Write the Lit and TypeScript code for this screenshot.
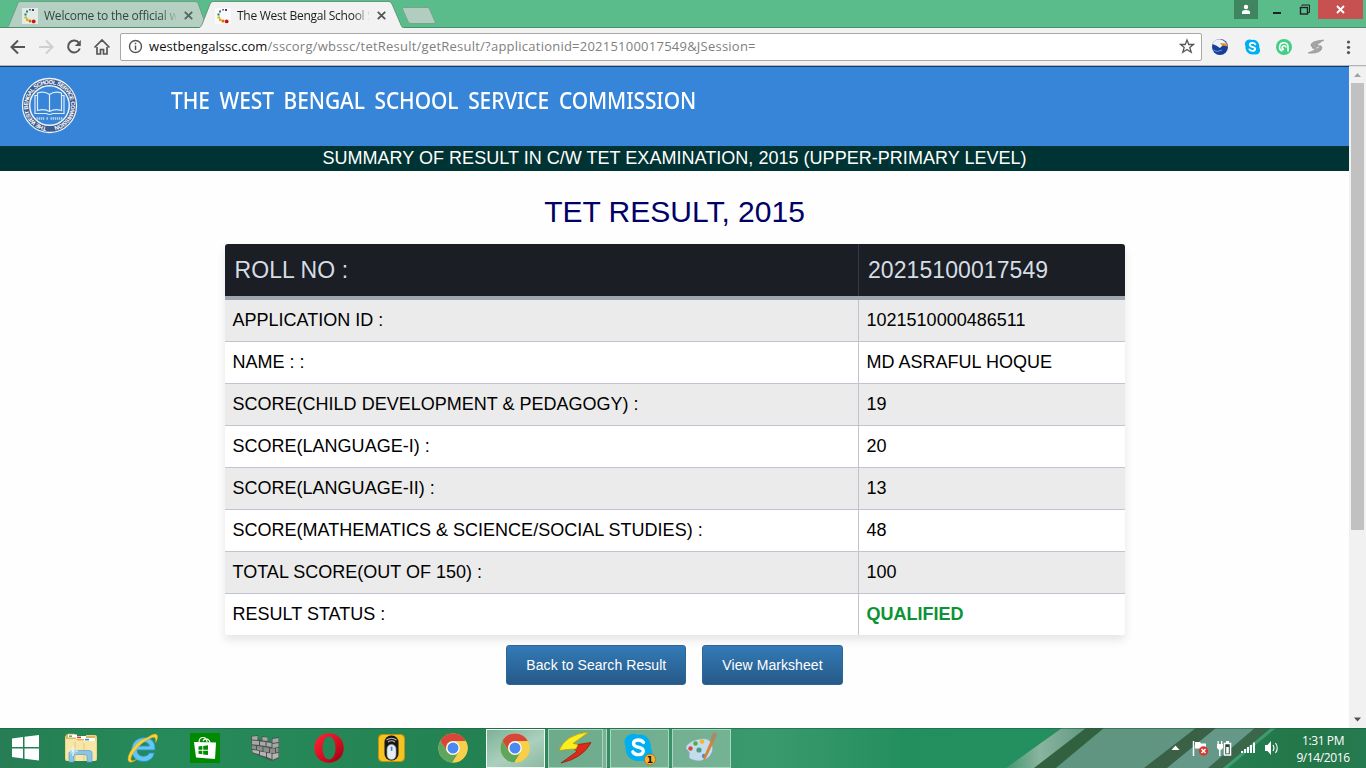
import { LitElement, html, svg, css } from "lit";
import { customElement, property } from "lit/decorators.js";

const favicon = html`<svg class="fav" width="16" height="16" viewBox="0 0 16 16">
  <rect width="16" height="16" fill="#fff" opacity=".6"/>
  <rect x="7" y="1" width="2" height="1.5" fill="#66619a"/><rect x="10" y="1" width="2" height="2" fill="#4b3a78"/>
  <rect x="4" y="2.5" width="2" height="2" fill="#3f6c8c"/><rect x="2.5" y="5.5" width="2" height="2" fill="#267a4a"/>
  <rect x="2.5" y="8.5" width="2.5" height="2" fill="#b7bb2c"/><rect x="4" y="10.5" width="2.5" height="2.5" fill="#e8a50f"/>
  <circle cx="8" cy="13" r="1.5" fill="#e06a12"/><circle cx="11.7" cy="13.4" r="1.9" fill="#cf1212"/></svg>`;

const chromeIcon = html`<svg width="30" height="30" viewBox="-15 -15 30 30">
  <circle r="14.6" fill="#f7cf48"/>
  <path d="M-12.6 -7.3A14.6 14.6 0 0 1 12.8 -7H0A7 7 0 0 0 -6.1 3.5Z" fill="#d8453a"/>
  <path d="M-12.6 -7.3A14.6 14.6 0 0 0 -.6 14.6L6.1 3.5A7 7 0 0 1 -6.1 3.5Z" fill="#5ca660"/>
  <path d="M12.8 -7A14.6 14.6 0 0 1 -.6 14.6L6.1 3.5A7 7 0 0 0 0 -7Z" fill="#f7cf48"/>
  <circle r="6.8" fill="#fff"/><circle r="5.5" fill="#4a8af0"/></svg>`;

const skypeShape = svg`<path d="M9 1Q12 .3 14 1.8Q22 .3 26 7Q28.5 11 28 16Q30.5 20 28.500 24Q25.500 29.500 19 27.800Q10 29.500 5 23Q2 19 2.600 13.500Q.500 9 2.500 5Q5 1.500 9 1Z" fill="#00aff0"/>
  <path d="M20.500 9.500Q18.500 6.800 15 7Q10.500 7.200 10.500 10.600Q10.500 13.300 15 14.200Q20.300 15.300 20.300 18Q20 21.600 15.500 21.700Q11.500 21.700 9.800 18.800" fill="none" stroke="#fff" stroke-width="3.300" stroke-linecap="round"/>`;

const icons = {
  explorer: html`<svg width="34" height="30" viewBox="0 0 34 30">
    <path d="M1 5Q1 2 3 2H11L13 5H22V2H31Q33 2 33 5V26Q33 28 31 28H3Q1 28 1 26Z" fill="#ecd382"/>
    <path d="M2 4Q2 .8 4 .8H10Q11 .8 12 3H31V7H2Z" fill="#d9b75e"/>
    <rect x="4" y="1.500" width="9" height="3" fill="#fff"/><rect x="5" y="2.500" width="3" height="1.400" fill="#3ca646"/>
    <rect x="12" y="3" width="10" height="3" fill="#fff"/><rect x="13" y="3.600" width="4" height="1.600" fill="#d63b2e"/>
    <rect x="20" y="5" width="11" height="3" fill="#fff"/><rect x="21" y="5.800" width="4" height="1.600" fill="#3b85cf"/>
    <path d="M2 6H12L14 8H32V25Q32 28 30 28H4Q2 28 2 25Z" fill="#f8e6a8"/><path d="M11 9V28M20 10V28" stroke="#e4c878"/>
    <path d="M5 29V20Q5 17.500 8 17.500H25Q28 17.500 28 20V29H23V23Q23 21.500 21 21.500H12Q10 21.500 10 23V29Z" fill="#8cc4e4" stroke="#5d9fc9" stroke-width=".7"/>
    <path d="M9 13V23M4 18H14" stroke="#e8faff" stroke-width="1.200"/><path d="M6 15L12 21M12 15L6 21" stroke="#e8faff" stroke-width=".6"/></svg>`,
  ie: html`<svg width="32" height="32" viewBox="0 0 32 32">
    <path d="M22.500 21Q20.500 24.300 16.500 24.300Q10.500 24 10 18H28Q29 7 18.500 5.500Q6 5.500 4.500 17Q5 29.500 17 29.500Q25 29.500 27.500 21ZM10.300 14Q11.500 10 16.500 10Q21.500 10 22.300 14Z" fill="#62c8f3" stroke="#288fc8" stroke-width=".9"/>
    <path d="M20.500 5.500Q29.500 -.5 30.500 4Q31 6.500 28.500 10.500Q29.500 4.500 25.500 5.500Q19 7 11 15Q3 24 4 28Q5.500 30 10 27Q2.500 33 1 28Q.5 21 10 11.500Q15 7 20.500 5.500Z" fill="#f9d33c" stroke="#dfa51c" stroke-width=".5"/></svg>`,
  store: html`<svg width="30" height="30" viewBox="0 0 30 30"><rect width="30" height="30" fill="#008a00"/>
    <path d="M4 9L26 9.500L25 26L6 24.500Z" fill="#fff"/><path d="M9 9.500Q9 4.500 13 4.500T17 9.500M13 8Q14 5.500 17 6Q19.500 6.500 20 10" fill="none" stroke="#fff" stroke-width="1.200"/>
    <path d="M8.500 13.500L12.300 13V16.800H8.500ZM13.200 12.900L18 12.300V16.800H13.200ZM8.500 17.700H12.300V21.300L8.500 20.800ZM13.200 17.700H18V22L13.200 21.400Z" fill="#008a00"/></svg>`,
  wall: html`<svg class="wall" width="30" height="26" viewBox="0 0 30 26"><path d="M0 1L7 0V4L11 5V1L17 2V6L21 7V3L28 2V23L21 26L1 18Z" fill="#4d514f"/>
    <g fill="#a6aaa7"><path d="M1 1.500L6.500 1V5L1 4.500ZM11.500 2L16.500 2.500V6L11.500 5.500ZM21.500 4L27.500 3V7L21.500 8Z"/><path d="M1 5.500L8 6.100V10L1 9.300ZM9 6.500L14.500 7V11L9 10.200ZM15.500 7.200L20.500 8V12L15.500 11.200ZM21.500 9L27.500 8V12L21.500 13Z"/></g>
    <g fill="#8b8f8c"><path d="M1 10.300L5 11V14.500L1 13.700ZM6 11L11.500 11.800V16L6 15ZM12.500 12L18 13V17.500L12.500 16.500ZM19 13.500L24 13.500V18L19 18ZM25 13L27.500 13V17L25 17.500Z"/></g>
    <g fill="#b3b6b3"><path d="M1.500 14.700L8 16V19.300L1.500 17.300ZM9 16.500L15 17.600V21.700L9 20ZM16 18L20.500 18.500V24L16 22ZM21.500 19L27.500 18V22.300L21.500 24.800Z"/></g></svg>`,
  opera: html`<svg width="30" height="30" viewBox="0 0 30 30"><defs><linearGradient id="og" x2="1" y2="1"><stop stop-color="#ff2638"/><stop offset=".55" stop-color="#d80d20"/><stop offset="1" stop-color="#8f0410"/></linearGradient></defs>
    <path fill-rule="evenodd" fill="url(#og)" d="M15 .3C23.500 .3 29.700 6.500 29.700 15S23.500 29.700 15 29.700S.3 23.500 .3 15S6.500 .3 15 .3ZM15 3.500C11.500 3.500 8.500 8 8.500 15S11.500 26.500 15 26.500S21.500 22 21.500 15S18.500 3.500 15 3.500Z"/></svg>`,
  mouse: html`<svg width="27" height="28" viewBox="0 0 27 28"><rect x=".5" y=".5" width="26" height="27" rx="4" fill="#f5c421" stroke="#c6900e"/>
    <rect x="6.500" y="1.500" width="14" height="25" rx="6.500" fill="#171717"/><path d="M8.500 6Q13.500 2.500 18.500 6M10 8Q13.500 5.500 17 8" fill="none" stroke="#b8b8b8" stroke-width="1.200"/>
    <rect x="9" y="10.500" width="9" height="15" rx="4.500" fill="#e9eef3" stroke="#8b949c" stroke-width=".7"/><rect x="12.700" y="12.500" width="1.800" height="4.500" rx=".9" fill="#4489c7"/></svg>`,
  chrome: chromeIcon,
  bolt: html`<svg width="34" height="34" viewBox="0 0 34 34">
    <path d="M20 13.500L33 11.500Q25 27 3 32L19 20.500L15 17Z" fill="#dc2b17" stroke="#8f170a" stroke-width=".7" stroke-linejoin="round"/>
    <path d="M31 1Q7 3.500 1 19.500Q10 18 18 18L20 13.500L15 12.500Z" fill="#fbee20" stroke="#b39a10" stroke-width=".7" stroke-linejoin="round"/></svg>`,
  skype: html`<svg class="sk" width="34" height="34" viewBox="0 0 34 34">${skypeShape}
    <circle cx="27" cy="26.500" r="5.500" fill="#f9b233" stroke="#9a6a13" stroke-width=".7"/><text x="27" y="29.800" text-anchor="middle" font-size="9" font-weight="700" font-family="DejaVu Sans, sans-serif" fill="#111">1</text></svg>`,
  paint: html`<svg width="32" height="32" viewBox="0 0 32 32">
    <path d="M14 7Q24 5 27 12Q30 20 23 26Q16 31 8 28Q3 27 4 23Q5 20 2 18Q-1 15 3 12Q7 8 14 7Z" fill="#c2ddeb" stroke="#7d9fb0" stroke-width=".7"/>
    <circle cx="14" cy="18" r="2.600" fill="#4f9a80"/><circle cx="5.500" cy="16.500" r="2.200" fill="#d64937"/><circle cx="10.500" cy="11.500" r="2.300" fill="#55ac42"/><circle cx="17" cy="9.500" r="2.300" fill="#edb82c"/><circle cx="19" cy="24" r="2.200" fill="#4b8bd0"/>
    <path d="M18 29.500L19 24.500L26 8L29 9.500L21 26Z" fill="#d98332"/><path d="M25.500 8.500L29 10L32 2Q31 0 28.500 .5Q25.500 4 25.500 8.500Z" fill="#a98968"/></svg>`,
};

@customElement("browser-chrome")
class BrowserChrome extends LitElement {
  static styles = css`
    :host { display: block; height: 66px; background: #f2f2f2; font-family: "Open Sans", sans-serif; flex: none; }
    .strip { height: 28px; background: #5bbc8b; position: relative; display: flex; }
    .shapes { position: absolute; left: 0; top: 0; }
    .tab { position: relative; display: flex; align-items: center; height: 28px; box-sizing: border-box; padding-top: 3px; font-size: 12px; color: #2f4a40; }
    .one { padding-left: 22px; width: 193px; }
    .two { width: 200px; color: #1c1c1c; }
    .gap { flex: none; }
    .fav { flex: none; margin-right: 6px; }
    .label { width: 132px; overflow: hidden; white-space: nowrap; -webkit-mask-image: linear-gradient(90deg, #000 116px, transparent 134px); }
    .one .label { letter-spacing: -.22px; }
    .two .label { letter-spacing: -.26px; }
    .x { margin-left: 8px; flex: none; }
    .win { margin-left: auto; position: relative; display: flex; height: 19px; padding-right: 3px; }
    .user { width: 24px; margin-right: -2px; background: #3f8560; display: grid; place-items: center; }
    .btn { width: 26px; display: grid; place-items: center; }
    .btn.min { width: 36px; padding-left: 6px; box-sizing: border-box; }
    .close { width: 45px; background: #c75050; display: grid; place-items: center; }
    .bar { height: 38px; box-sizing: border-box; border-bottom: 1px solid #b4b4b4; display: flex; align-items: center; padding: 1px 0 1px 10px; }
    .nav { flex: none; width: 110px; }
    .url { flex: none; width: 1082px; height: 28px; box-sizing: border-box; border: 1px solid #a8a8a8; border-radius: 2px; background: #fff; display: flex; align-items: center; padding: 0 6px 1px 7px; font-size: 13px; color: #808080; white-space: nowrap; }
    .url b { font-weight: 400; color: #111; letter-spacing: .08px; }
    .addr { margin-left: 6px; letter-spacing: .235px; }
    .star { margin-left: auto; }
    .ext { flex: none; margin-left: 7px; }
  `;
  render() {
    return html`
      <div class="strip">
        <svg class="shapes" width="1366" height="28">
          <path d="M6 28Q8 27.500 9 25L18 3Q18.500 1.500 20.500 1.500H195Q197 1.500 198 3L207 28Z" fill="#b5cfc2" stroke="#6f9f87"/>
          <path d="M0 27.500H200M404 27.500H1366" fill="none" stroke="#4b8d6c"/>
          <path d="M198 28.500Q201 27 202 24.500L210 4Q211 1.500 213 1.500H389Q391 1.500 392 4L401 25Q402 27.500 404 28.500Z" fill="#f2f2f2" stroke="#629a7e"/>
          <path d="M404 7.500H428Q429 7.500 429.500 9L435 21.500Q436 23.500 434 23.500H411Q409 23.500 408 21.500L402.500 9Q402 7.500 404 7.500Z" fill="#b0cdbf" stroke="#75a68d"/>
        </svg>
        <div class="tab one">${favicon}<span class="label">Welcome to the official w</span>${this.cross("#55665e")}</div>
        <div class="tab two"><svg class="gap" width="22" height="1"></svg>${favicon}<span class="label">The West Bengal School S</span>${this.cross("#555")}</div>
        <div class="win">
          <div class="user"><svg width="10" height="12" viewBox="0 0 10 12" fill="#fff"><circle cx="5" cy="3" r="2.200"/><path d="M1 10V8Q1 6 5 6T9 8V10Z"/></svg></div>
          <div class="btn min"><svg width="9" height="12"><rect x="0" y="8" width="8" height="2" fill="#222"/></svg></div>
          <div class="btn"><svg width="12" height="12" fill="none" stroke="#222"><path d="M3 2V1H10.500V8.500H9"/><rect x="1.500" y="3.500" width="7" height="6.500" stroke-width="1.400"/></svg></div>
          <div class="close"><svg width="9" height="9" stroke="#fff" stroke-width="1.900"><path d="M1 1L8 8M8 1L1 8"/></svg></div>
        </div>
      </div>
      <div class="bar">
        <svg class="nav" width="110" height="24" viewBox="10 35 110 24" fill="none" stroke="#555" stroke-width="2">
          <path d="M25 47H12M18 40.500L11.500 47L18 53.500"/>
          <path d="M39 47H52M46 40.500L52.500 47L46 53.500" stroke="#cfcfcf"/>
          <path d="M79 43A6 6 0 1 0 79.800 48.500"/><path d="M80.800 40V46H74.800Z" fill="#555" stroke="none"/>
          <path d="M94.500 47.500L102 40L109.500 47.500M97 47V54H100.500V49.500H103.500V54H107V47" stroke-width="1.700"/></svg>
        <div class="url">
          <svg width="15" height="15" viewBox="0 0 15 15" fill="none" stroke="#555"><circle cx="7.500" cy="7.500" r="6" stroke-width="1.400"/><path d="M7.500 6.500V11M7.500 3.800V5.300" stroke-width="1.500"/></svg>
          <span class="addr"><b>westbengalssc.com</b>/sscorg/wbssc/tetResult/getResult/?applicationid=20215100017549&amp;JSession=</span>
          <svg class="star" width="16" height="16" viewBox="0 0 16 16" fill="none" stroke="#555" stroke-width="1.300"><path d="M8 2L9.800 6.500H14.500L10.800 9.500L12.200 14.300L8 11.500L3.800 14.300L5.200 9.500L1.500 6.500H6.200Z"/></svg>
        </div>
        <svg class="ext" width="150" height="20" viewBox="1209 37 150 20">
          <circle cx="1220" cy="47" r="8" fill="#173f97"/><path d="M1212.500 44Q1215 38.500 1221 39.500Q1226 41 1227.500 46L1223 45L1220 48Q1216 45 1212.500 44Z" fill="#eef2f7"/><path d="M1220 43L1226 43.500L1228 46.500L1222 45.500Z" fill="#e88922"/><path d="M1213 50Q1217 53 1222 50" stroke="#5e95df" fill="none"/>
          <svg x="1244" y="39" width="16.500" height="16.500" viewBox="0 0 30 30">${skypeShape}</svg>
          <circle cx="1284" cy="47" r="8" fill="#43cf85"/><path d="M1282.500 51A4.200 4.200 0 1 1 1288 47V51.500M1286 47.500A1.900 1.900 0 1 0 1284 49.500" fill="none" stroke="#fff" stroke-width="1.600"/>
          <path d="M1324 40Q1310 41 1311 46Q1312 48 1317 46Q1317 44 1324 40ZM1308 53Q1322 54 1322 47Q1321 45 1316 47.500Q1316 50 1308 53ZM1315 45.500L1321 46L1317 49L1312 48Z" fill="#a5a5a5" stroke="#8f8f8f" stroke-width=".6"/>
          <g fill="#555"><circle cx="1348.500" cy="42" r="1.600"/><circle cx="1348.500" cy="47.300" r="1.600"/><circle cx="1348.500" cy="52.600" r="1.600"/></g>
        </svg>
      </div>`;
  }
  cross(c: string) {
    return html`<svg class="x" width="9" height="9" stroke=${c} stroke-width="1.800"><path d="M.8 .8L8.200 8.200M8.200 .8L.8 8.200"/></svg>`;
  }
}

@customElement("result-table")
class ResultTable extends LitElement {
  @property({ attribute: false }) rows: [string, string][] = [];
  static styles = css`
    :host { display: block; width: 900px; border-radius: 3px; box-shadow: 0 5px 10px rgba(0,0,0,.1); font-family: "Liberation Sans", Arial, sans-serif; }
    .row { display: grid; grid-template-columns: 633px 267px; height: 41px; border-bottom: 1px solid #c1c3d1; background: #fff; font-size: 18px; line-height: 41px; color: #000; letter-spacing: .01px; }
    .row:nth-child(even) { background: #ebebeb; }
    .row:last-child { border-bottom: 0; border-radius: 0 0 3px 3px; }
    .row > span { padding-left: 8px; white-space: nowrap; }
    .row > span + span { border-left: 1px solid #c1c3d1; }
    .row.head { height: 52px; line-height: 53px; font-size: 23px; letter-spacing: .08px; color: #d5dde5; background: #1b1e24; border-bottom: 4px solid #9ea7af; border-radius: 3px 3px 0 0; }
    .row.head > span { height: 52px; padding-left: 10px; }
    .row.head > span + span { border-color: #343a45; padding-left: 9.500px; }
    .ok { color: #0b9335; font-weight: 700; }
  `;
  render() {
    return html`<div class="row head"><span>ROLL NO :</span><span>20215100017549</span></div>
      ${this.rows.map(([k, v]) => html`<div class="row"><span>${k}</span><span class=${v === "QUALIFIED" ? "ok" : ""}>${v}</span></div>`)}`;
  }
}

@customElement("task-bar")
class TaskBar extends LitElement {
  static styles = css`
    :host { display: flex; position: relative; height: 40px; flex: none; overflow: hidden; font-family: "Open Sans", sans-serif; }
    .bg { position: absolute; inset: 0; }
    .start { position: relative; width: 50px; display: grid; place-items: center; }
    .item { position: relative; width: 62px; display: grid; place-items: center; }
    .wall { margin-right: 2px; }
    .box { box-sizing: border-box; width: 59px; height: 39px; border: 1px solid rgba(190,225,208,.75); background: rgba(175,205,190,.5); display: grid; place-items: center; }
    .box.active { border-color: #f1f8f4; background: linear-gradient(150deg, #7cb197, #abd0bd 55%, #8cb9a2); }
    .box.group { width: 55px; margin-right: 4px; box-shadow: 3px 0 0 #7bb295, 4px 0 0 #b5d7c6; }
    .sk { margin: 3px 0 0 2px; }
    .tray { position: relative; margin-left: auto; display: flex; align-items: center; }
    .clock { width: 86px; text-align: center; color: #fff; font-size: 12px; line-height: 17px; padding-top: 1px; letter-spacing: -.4px; }
  `;
  render() {
    const pinned = ["explorer", "ie", "store", "wall", "opera", "mouse", "chrome"] as const;
    const open: [keyof typeof icons, string][] = [["chrome", "active"], ["bolt", "group"], ["skype", ""], ["paint", ""]];
    return html`
      <svg class="bg" width="1366" height="40" viewBox="0 0 1366 40">
        <defs><linearGradient id="g"><stop stop-color="#277d55"/><stop offset=".04" stop-color="#258254"/><stop offset=".12" stop-color="#278a5b"/><stop offset=".35" stop-color="#248252"/><stop offset=".5" stop-color="#389467"/><stop offset=".56" stop-color="#3a9a6e"/><stop offset=".66" stop-color="#248f5e"/><stop offset=".76" stop-color="#24905f"/><stop offset=".9" stop-color="#247d50"/><stop offset=".96" stop-color="#237648"/><stop offset="1" stop-color="#257b50"/></linearGradient>
        <linearGradient id="s"><stop stop-color="#43966f"/><stop offset=".4" stop-color="#8ab49f"/><stop offset="1" stop-color="#5e9680"/></linearGradient></defs>
        <rect width="1366" height="40" fill="url(#g)"/>
        <path d="M1062 0H1090L1040 40H1006Z" fill="url(#s)"/>
        <path d="M1086 0H1104L1056 40H1034Z" fill="#32613f"/>
        <path d="M1104 0H1196L1146 40H1056Z" fill="#5f9581"/>
        <path d="M1196 0H1216L1167 40H1144Z" fill="#3a6045"/>
        <path d="M1216 0H1255L1209 40H1167Z" fill="#66988a"/>
        <path d="M1255 0H1271L1223 40H1208Z" fill="#3a674a"/>
        <path d="M1271 0H1276L1228 40H1223Z" fill="#3c9b70"/>
        <rect width="1366" height="1" fill="#1f5a3e" opacity=".55"/>
      </svg>
      <div class="start"><svg width="27" height="26" viewBox="0 0 27 26" fill="#fff"><path d="M0 3.500L11 2V12H0ZM12.500 1.800L27 0V12H12.500ZM0 13.500H11V23.500L0 22ZM12.500 13.500H27V25.500L12.500 23.700Z"/></svg></div>
      ${pinned.map((n) => html`<div class="item">${icons[n]}</div>`)}
      ${open.map(([n, c]) => html`<div class="item"><div class="box ${c}">${icons[n]}</div></div>`)}
      <div class="tray">
        <svg width="115" height="24" viewBox="1165 737 115 24">
          <path d="M1171.500 751L1175.500 746.500L1179.500 751Z" fill="#fff"/>
          <path d="M1193.500 742V757" stroke="#fff" stroke-width="1.500"/><path d="M1195 743H1200L1201 744.500H1206V751H1201L1200 749.500H1195Z" fill="#fff"/><circle cx="1203.500" cy="752" r="4.700" fill="#d9382e"/><path d="M1201.500 750L1205.500 754M1205.500 750L1201.500 754" stroke="#fff" stroke-width="1.500"/>
          <path d="M1217 745H1223V749L1221 751H1220.500V757H1219V751L1217 749ZM1217.500 742H1218.800V745H1217.500ZM1221 742H1222.300V745H1221Z" fill="#fff"/><path d="M1224.500 744.500H1230.500V756H1224.500Z" stroke="#fff" stroke-width="1.500" fill="#254b38"/><path d="M1226 742H1229V744H1226ZM1226.200 748H1228.800V754.500H1226.200Z" fill="#fff"/>
          <g fill="#fff"><rect x="1241" y="752" width="2" height="2"/><rect x="1244" y="750" width="2" height="4"/><rect x="1247" y="748" width="2" height="6"/><rect x="1250" y="746" width="2" height="8"/><rect x="1253" y="743.500" width="2" height="10.500"/></g>
          <path d="M1265 746H1267.500L1271 742V756L1267.500 752H1265Z" fill="#fff"/><path d="M1273 746Q1275 749 1273 752M1275.500 744Q1279 749 1275.500 754" fill="none" stroke="#fff" stroke-width="1.100"/>
        </svg>
        <div class="clock"><div>1:31 PM</div><div>9/14/2016</div></div>
      </div>`;
  }
}

@customElement("app-root")
class AppRoot extends LitElement {
  static styles = css`
    :host { display: flex; flex-direction: column; width: 1366px; height: 768px; overflow: hidden; font-family: "Liberation Sans", Arial, sans-serif; }
    .view { flex: 1; min-height: 0; display: flex; }
    .page { width: 1349px; background: #fefefe; display: flex; flex-direction: column; align-items: center; }
    .header { align-self: stretch; height: 79px; border-top: 1px solid #0f3c6c; background: #3685d8; display: flex; }
    .seal { margin: 8px 0 0 19px; flex: none; }
    .org { margin: 15px 0 0 92px; font: 500 23.500px/36px "Noto Sans", sans-serif; color: #fff; white-space: nowrap; transform: scaleX(.89); transform-origin: 0 0; letter-spacing: -.1px; word-spacing: 5px; }
    .summary { align-self: stretch; height: 25px; line-height: 24px; background: #033; color: #fff; text-align: center; font-size: 18px; letter-spacing: .03px; }
    .title { height: 73px; line-height: 82px; font-size: 30px; color: #006; }
    .actions { display: flex; gap: 16px; margin-top: 10px; }
    .button { box-sizing: border-box; height: 40px; padding: 0 19px; border: 1px solid #2c659a; border-radius: 3px; font: 14px/38px "Liberation Sans", Arial, sans-serif; letter-spacing: .07px; color: #fff; background: linear-gradient(#337ab7, #265a88); white-space: nowrap; }
    .scroll { width: 17px; background: #f1f1f1; border-top: 1px solid #e0e0e0; box-sizing: border-box; display: flex; flex-direction: column; align-items: center; }
    .arrow { height: 16px; width: 17px; flex: none; }
    .thumb { width: 13px; height: 447px; background: #c1c1c1; margin-bottom: auto; }
  `;
  rows: [string, string][] = [
    ["APPLICATION ID :", "1021510000486511"],
    ["NAME : :", "MD ASRAFUL HOQUE"],
    ["SCORE(CHILD DEVELOPMENT & PEDAGOGY) :", "19"],
    ["SCORE(LANGUAGE-I) :", "20"],
    ["SCORE(LANGUAGE-II) :", "13"],
    ["SCORE(MATHEMATICS & SCIENCE/SOCIAL STUDIES) :", "48"],
    ["TOTAL SCORE(OUT OF 150) :", "100"],
    ["RESULT STATUS :", "QUALIFIED"],
  ];
  render() {
    return html`
      <browser-chrome></browser-chrome>
      <div class="view">
        <div class="page">
          <div class="header">
            <svg class="seal" width="60" height="60" viewBox="-30.500 -30.500 60 60">
              <circle r="23.600" fill="none" stroke="#3b5c8e" stroke-width="7"/>
              <circle r="27" fill="none" stroke="#eef3f9" stroke-width="1.300"/><circle r="19.800" fill="none" stroke="#eef3f9" stroke-width="1.500"/>
              <defs><path id="ring" d="M-3 21.300A21.500 21.500 0 1 1 3 21.300"/></defs>
              <text font-size="5.800" font-weight="700" fill="#fff" font-family="Liberation Sans, sans-serif"><textPath href="#ring" textLength="127">THE WEST BENGAL SCHOOL SERVICE COMMISSION</textPath></text>
              <g fill="none" stroke="#e3ebf5" stroke-width="1.200"><path d="M0 -11Q-5 -15 -12 -12.500V5Q-5 3 0 6Q5 3 12 5V-12.500Q5 -15 0 -11V6"/><path d="M-12 -10H-14.500V8H-3Q0 10 3 8H14.500V-10H12"/></g>
              <path d="M-13 13H-5M-3 13H-1M1 13H13" stroke="#c0cfe4" stroke-width="2.600" stroke-dasharray="1.400 .7"/>
            </svg>
            <div class="org">THE WEST BENGAL SCHOOL SERVICE COMMISSION</div>
          </div>
          <div class="summary">SUMMARY OF RESULT IN C/W TET EXAMINATION, 2015 (UPPER-PRIMARY LEVEL)</div>
          <div class="title">TET RESULT, 2015</div>
          <result-table .rows=${this.rows}></result-table>
          <div class="actions"><div class="button">Back to Search Result</div><div class="button">View Marksheet</div></div>
        </div>
        <div class="scroll">
          <svg class="arrow" viewBox="0 0 17 16"><path d="M5 10L8.500 6L12 10Z" fill="#a3a3a3"/></svg>
          <div class="thumb"></div>
          <svg class="arrow" viewBox="0 0 17 16"><path d="M5 5.500L8.500 9.500L12 5.500Z" fill="#505050"/></svg>
        </div>
      </div>
      <task-bar></task-bar>`;
  }
}
